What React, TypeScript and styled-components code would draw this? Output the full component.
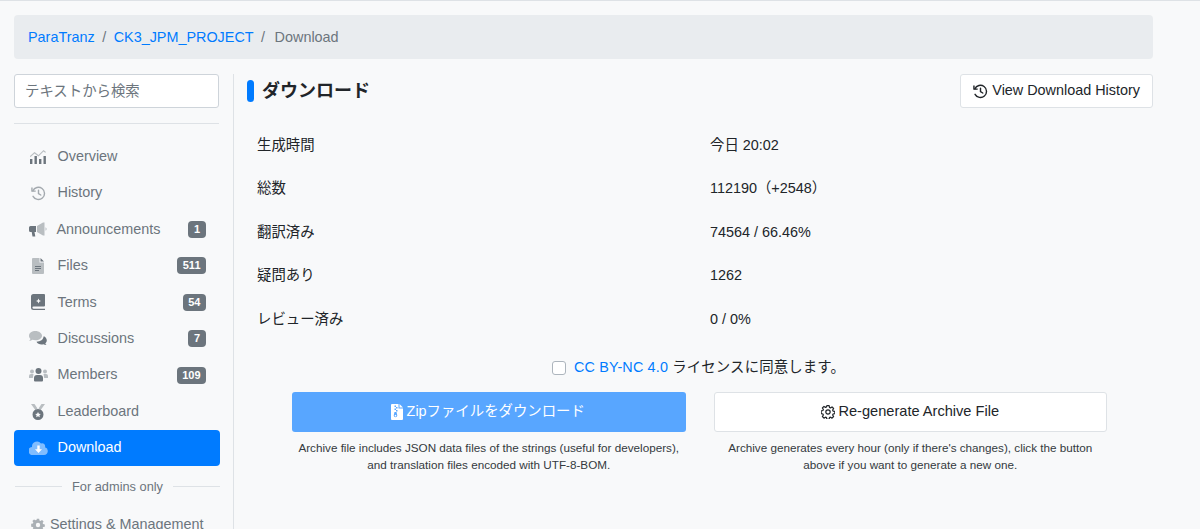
import React from 'react';
import styled, { createGlobalStyle } from 'styled-components';

const GlobalStyle = createGlobalStyle`
  html, body {
    margin: 0;
    height: 100%;
    overflow: hidden;
    background: #f8f9fa;
  }
  body {
    font-family: "Liberation Sans", Arial, "Noto Sans CJK JP", sans-serif;
    font-size: 14.4px;
    line-height: 1.5;
    color: #212529;
  }
  * {
    box-sizing: border-box;
  }
`;

const Page = styled.div`
  height: 529px;
  overflow: hidden;
  border-top: 1px solid #dee2e6;
  padding: 14px 47px 0 14px;
`;

const Breadcrumb = styled.nav`
  display: flex;
  align-items: center;
  height: 44px;
  padding: 1px 14px 0;
  margin-bottom: 15px;
  background: #e9ecef;
  border-radius: 4px;
  color: #6c757d;
`;

const Crumb = styled.a`
  color: #007bff;
  text-decoration: none;
`;

const CrumbSep = styled.span`
  padding: 0 7.5px;
  color: #6c757d;
`;

const CurrentCrumb = styled.span`
  margin-left: 2px;
`;

const Columns = styled.div`
  display: grid;
  grid-template-columns: 219px 1fr;
  align-items: start;
`;

const Sidebar = styled.aside`
  width: 206px;
`;

const SearchInput = styled.input`
  display: block;
  width: 205px;
  height: 34px;
  padding: 0 10px;
  font: inherit;
  color: #495057;
  background: #fff;
  border: 1px solid #ced4da;
  border-radius: 3px;
  &::placeholder {
    color: #6c757d;
    opacity: 1;
  }
`;

const Rule = styled.hr`
  width: 205px;
  margin: 15px 0 14.5px;
  border: 0;
  border-top: 1px solid #dee2e6;
`;

const NavList = styled.div`
  display: flex;
  flex-direction: column;
`;

const NavItem = styled.a<{ $active?: boolean }>`
  display: flex;
  align-items: center;
  height: 36.43px;
  padding: 0 14px;
  border-radius: 4px;
  white-space: nowrap;
  color: ${(p) => (p.$active ? '#fff' : '#6c757d')};
  background: ${(p) => (p.$active ? '#007bff' : 'transparent')};
`;

const NavIcon = styled.span<{ $tight?: boolean }>`
  flex: none;
  display: flex;
  align-items: center;
  justify-content: center;
  width: 20px;
  margin-right: ${(p) => (p.$tight ? '2px' : '9.5px')};
  svg {
    display: block;
  }
`;

const NavLabel = styled.span<{ $nudge?: boolean }>`
  flex: 1;
  margin-left: ${(p) => (p.$nudge ? '-1px' : '0')};
`;

const Badge = styled.span`
  flex: none;
  min-width: 18px;
  height: 17px;
  padding: 0 5.5px;
  font-size: 11px;
  font-weight: 700;
  line-height: 17px;
  text-align: center;
  color: #fff;
  background: #6c757d;
  border-radius: 4px;
`;

const AdminDivider = styled.div`
  display: flex;
  align-items: center;
  gap: 10px;
  height: 21px;
  margin-top: 9.5px;
  margin-bottom: 10px;
  padding-left: 1px;
  font-size: 12.8px;
  color: #6c757d;
  &::before,
  &::after {
    content: '';
    flex: 1;
    border-top: 1px solid #dee2e6;
  }
`;

const Main = styled.main`
  min-height: 500px;
  padding-left: 13px;
  border-left: 1px solid #dee2e6;
`;

const Header = styled.div`
  display: flex;
  align-items: center;
  justify-content: space-between;
  height: 34px;
  margin-bottom: 16px;
`;

const Title = styled.h2`
  display: flex;
  align-items: center;
  gap: 8px;
  margin: 0;
  font-size: 18px;
  font-weight: 700;
  &::before {
    content: '';
    width: 7px;
    height: 22px;
    background: #007bff;
    border-radius: 4px;
  }
`;

const OutlineButton = styled.button<{ $block?: boolean }>`
  display: flex;
  align-items: center;
  justify-content: center;
  gap: ${(p) => (p.$block ? '3px' : '4px')};
  width: ${(p) => (p.$block ? '100%' : 'auto')};
  height: ${(p) => (p.$block ? '40px' : '34px')};
  padding: 0 12px;
  font: inherit;
  font-size: ${(p) => (p.$block ? '14.6px' : '14.4px')};
  color: #212529;
  background: #fff;
  border: 1px solid #dee2e6;
  border-radius: 3px;
`;

const PrimaryButton = styled.button`
  display: flex;
  align-items: center;
  justify-content: center;
  gap: 4px;
  width: 100%;
  height: 40px;
  padding-right: 8px;
  font: inherit;
  color: #fff;
  background: #58a6ff;
  border: 0;
  border-radius: 3px;
`;

const Stats = styled.div`
  display: flex;
  flex-direction: column;
`;

const StatRow = styled.div`
  display: grid;
  grid-template-columns: 1fr 1fr;
  align-items: center;
  height: 43.5px;
  padding-left: 10px;
  & > span:last-child {
    padding-left: 5px;
  }
`;

const Agreement = styled.label`
  display: flex;
  align-items: center;
  justify-content: center;
  gap: 8px;
  height: 21px;
  margin: 16px 3px 13px 0;
  letter-spacing: 0.15px;
`;

const CheckBox = styled.span`
  width: 14px;
  height: 14px;
  background: #fff;
  border: 1px solid #adb5bd;
  border-radius: 3px;
`;

const Link = styled.a`
  color: #007bff;
  text-decoration: none;
`;

const Actions = styled.div`
  display: grid;
  grid-template-columns: 1fr 1fr;
  gap: 28px;
  width: 815px;
  margin-left: 45px;
`;

const Action = styled.div`
  display: flex;
  flex-direction: column;
`;

const Caption = styled.p`
  margin: 7px 0 0;
  font-size: 11.7px;
  line-height: 17.3px;
  text-align: center;
  color: #343a40;
`;

const HistoryIcon = ({ size = 15, two = false }: { size?: number; two?: boolean }) => (
  <svg width={size} height={size} viewBox="0 0 16 16" fill="none" stroke="currentColor" strokeWidth="1.5" opacity={two ? 0.6 : 1}>
    <path d="M1 1.5v4h4" strokeLinejoin="round" />
    <path d="M2 5.2A6.5 6.5 0 1 1 2.2 11" strokeLinecap="round" />
    <path d="M8 4.5V8l2.4 1.6" strokeLinecap="round" />
  </svg>
);

const ChartIcon = () => (
  <svg width="18" height="16" viewBox="0 0 18 16" fill="currentColor">
    <path opacity=".45" d="M1 7l4.5-4 4 3 5-5 2.5 2-.8.8-1.7-1.3-5 5-4-3-4.200 3.700z" />
    <rect x="1" y="10" width="2.400" height="5" />
    <rect x="5.500" y="7" width="2.400" height="8" />
    <rect x="10" y="10" width="2.400" height="5" />
    <rect x="14.500" y="7" width="2.400" height="8" />
  </svg>
);

const BullhornIcon = () => (
  <svg width="18" height="15" viewBox="0 0 18 15" fill="currentColor">
    <path d="M0 5.500A1.500 1.500 0 0 1 1.500 4H7v6H5.500l.8 4.500H3.500L2.700 10H1.500A1.500 1.500 0 0 1 0 8.500z" />
    <path opacity=".45" d="M8 4l6-3.500h1.500v13H14L8 10zM16.500 5.200a2 2 0 0 1 0 3.600z" />
  </svg>
);

const FileIcon = () => (
  <svg width="12" height="16" viewBox="0 0 12 16" fill="currentColor">
    <path opacity=".45" d="M0 1a1 1 0 0 1 1-1h6.500v4.500H12V15a1 1 0 0 1-1 1H1a1 1 0 0 1-1-1z" />
    <path d="M8.500 0L12 3.500H8.500zM3 8h6v1H3zM3 10h6v1H3zM3 12h4v1H3z" />
  </svg>
);

const BookIcon = () => (
  <svg width="14" height="16" viewBox="0 0 14 16" fill="currentColor">
    <path d="M2.500 0H13a1 1 0 0 1 1 1v10.500a1 1 0 0 1-1 1H2.500a1.100 1.100 0 0 0 0 2.200H14V16H2.500A2.500 2.500 0 0 1 0 13.500v-11A2.500 2.500 0 0 1 2.500 0z" />
    <path fill="#f8f9fa" d="M7.500 4.500l.8 1.700 1.700.8-1.700.8-.8 1.700-.8-1.700L5 7l1.700-.8z" />
  </svg>
);

const CommentsIcon = () => (
  <svg width="18" height="15" viewBox="0 0 18 15" fill="currentColor">
    <path opacity=".45" d="M6.500 0C3 0 0 2 0 4.800c0 1.300.6 2.300 1.500 3.200-.3.800-1 1.500-1.300 1.800 1.300 0 2.600-.5 3.300-1 .9.300 1.900.5 3 .5 3.500 0 6.500-2 6.500-4.500S10 0 6.500 0z" />
    <path d="M14.500 5.500c0 3-3 5-7 5.200.8 1.700 3 2.800 5 2.800.7 0 1.300-.1 1.900-.3.700.5 1.800.8 3.100.8-.5-.5-1-1.200-1.200-1.800.9-.7 1.500-1.700 1.500-2.800 0-1.600-1-3-2.300-3.900z" />
  </svg>
);

const UsersIcon = () => (
  <svg width="19" height="14" viewBox="0 0 19 14" fill="currentColor">
    <g opacity=".45">
      <circle cx="3" cy="3.500" r="2" />
      <circle cx="16" cy="3.500" r="2" />
      <path d="M0 10V8a2 2 0 0 1 2-2h2.500L3.800 10zM19 10V8a2 2 0 0 0-2-2h-2.500l.7 4z" />
    </g>
    <circle cx="9.500" cy="3" r="3" />
    <path d="M5 12.500V10a3 3 0 0 1 3-3h3a3 3 0 0 1 3 3v2.500a1 1 0 0 1-1 1H6a1 1 0 0 1-1-1z" />
  </svg>
);

const MedalIcon = () => (
  <svg width="14" height="16" viewBox="0 0 14 16" fill="currentColor">
    <path opacity=".45" d="M0 0h3.500l3 4.500-2 1.800zM14 0h-3.500l-3 4.500 2 1.800z" />
    <path fillRule="evenodd" d="M7 5a5.500 5.500 0 1 1 0 11A5.500 5.500 0 0 1 7 5zm0 3l.9 1.700 1.900.3-1.400 1.300.4 1.900L7 12.300l-1.800.9.400-1.900L4.200 10l1.900-.3z" />
  </svg>
);

const CloudIcon = () => (
  <svg width="19" height="14" viewBox="0 0 19 14" fill="currentColor">
    <path opacity=".5" d="M16 6.200A3 3 0 0 0 12 2.500 5 5 0 0 0 3 5.500v.4A4 4 0 0 0 4.300 14H15a4 4 0 0 0 1-7.800z" />
    <path d="M8.300 4.500h2.400v3.700H13l-3.500 3.800L6 8.200h2.300z" />
  </svg>
);

const CogIcon = ({ size = 14, solid = false }: { size?: number; solid?: boolean }) => (
  <svg width={size} height={size} viewBox="0 0 16 16" fill={solid ? 'currentColor' : 'none'} stroke="currentColor" strokeWidth={solid ? 0 : 1.4} opacity={solid ? 0.55 : 1}>
    <path
      fillRule="evenodd"
      d="M6.700.8h2.600l.4 2 1.100.5 1.800-1.100 1.800 1.800-1.100 1.800.5 1.100 2 .4v2.600l-2 .4-.5 1.100 1.100 1.800-1.800 1.800-1.800-1.100-1.100.5-.4 2H6.700l-.4-2-1.100-.5-1.800 1.100-1.800-1.800 1.100-1.800-.5-1.100-2-.4V6.700l2-.4.5-1.100-1.100-1.800 1.800-1.800 1.800 1.100 1.100-.5zM8 5.500a2.500 2.500 0 1 0 0 5 2.500 2.500 0 0 0 0-5z"
      strokeLinejoin="round"
    />
  </svg>
);

const ZipIcon = () => (
  <svg width="12" height="16" viewBox="0 0 12 16" fill="currentColor">
    <path
      fillRule="evenodd"
      d="M0 1a1 1 0 0 1 1-1h6.500v4.500H12V15a1 1 0 0 1-1 1H1a1 1 0 0 1-1-1zM3.500 1.500v1.500H5V1.500zM5 3v1.500h1.500V3zM3.500 4.500V6H5V4.500zM5 6v1.500h1.500V6zM3.500 8l-.8 3.500a1.800 1.800 0 1 0 3.600 0L5.500 8zm1 2.800a.8.8 0 1 1 0 1.700.8.8 0 0 1 0-1.700z"
    />
    <path d="M8.500 0L12 3.500H8.500z" />
  </svg>
);

const navItems = [
  { label: 'Overview', icon: <ChartIcon /> },
  { label: 'History', icon: <HistoryIcon two /> },
  { label: 'Announcements', icon: <BullhornIcon />, badge: '1', nudge: true },
  { label: 'Files', icon: <FileIcon />, badge: '511' },
  { label: 'Terms', icon: <BookIcon />, badge: '54' },
  { label: 'Discussions', icon: <CommentsIcon />, badge: '7' },
  { label: 'Members', icon: <UsersIcon />, badge: '109' },
  { label: 'Leaderboard', icon: <MedalIcon /> },
  { label: 'Download', icon: <CloudIcon />, active: true },
];

const stats = [
  ['生成時間', '今日 20:02'],
  ['総数', '112190（+2548）'],
  ['翻訳済み', '74564 / 66.46%'],
  ['疑問あり', '1262'],
  ['レビュー済み', '0 / 0%'],
];

export default function App() {
  return (
    <>
      <GlobalStyle />
      <Page>
        <Breadcrumb>
          <Crumb>ParaTranz</Crumb>
          <CrumbSep>/</CrumbSep>
          <Crumb>CK3_JPM_PROJECT</Crumb>
          <CrumbSep>/</CrumbSep>
          <CurrentCrumb>Download</CurrentCrumb>
        </Breadcrumb>
        <Columns>
          <Sidebar>
            <SearchInput placeholder="テキストから検索" />
            <Rule />
            <NavList>
              {navItems.map((item) => (
                <NavItem key={item.label} $active={item.active}>
                  <NavIcon>{item.icon}</NavIcon>
                  <NavLabel $nudge={item.nudge}>{item.label}</NavLabel>
                  {item.badge && <Badge>{item.badge}</Badge>}
                </NavItem>
              ))}
            </NavList>
            <AdminDivider>For admins only</AdminDivider>
            <NavItem>
              <NavIcon $tight>
                <CogIcon solid />
              </NavIcon>
              <NavLabel>Settings &amp; Management</NavLabel>
            </NavItem>
          </Sidebar>
          <Main>
            <Header>
              <Title>ダウンロード</Title>
              <OutlineButton>
                <HistoryIcon size={15} />
                View Download History
              </OutlineButton>
            </Header>
            <Stats>
              {stats.map(([label, value]) => (
                <StatRow key={label}>
                  <span>{label}</span>
                  <span>{value}</span>
                </StatRow>
              ))}
            </Stats>
            <Agreement>
              <CheckBox />
              <span>
                <Link>CC BY-NC 4.0</Link> ライセンスに同意します。
              </span>
            </Agreement>
            <Actions>
              <Action>
                <PrimaryButton>
                  <ZipIcon />
                  Zipファイルをダウンロード
                </PrimaryButton>
                <Caption>
                  Archive file includes JSON data files of the strings (useful for developers),
                  <br />
                  and translation files encoded with UTF-8-BOM.
                </Caption>
              </Action>
              <Action>
                <OutlineButton $block>
                  <CogIcon />
                  Re-generate Archive File
                </OutlineButton>
                <Caption>
                  Archive generates every hour (only if there's changes), click the button
                  <br />
                  above if you want to generate a new one.
                </Caption>
              </Action>
            </Actions>
          </Main>
        </Columns>
      </Page>
    </>
  );
}
